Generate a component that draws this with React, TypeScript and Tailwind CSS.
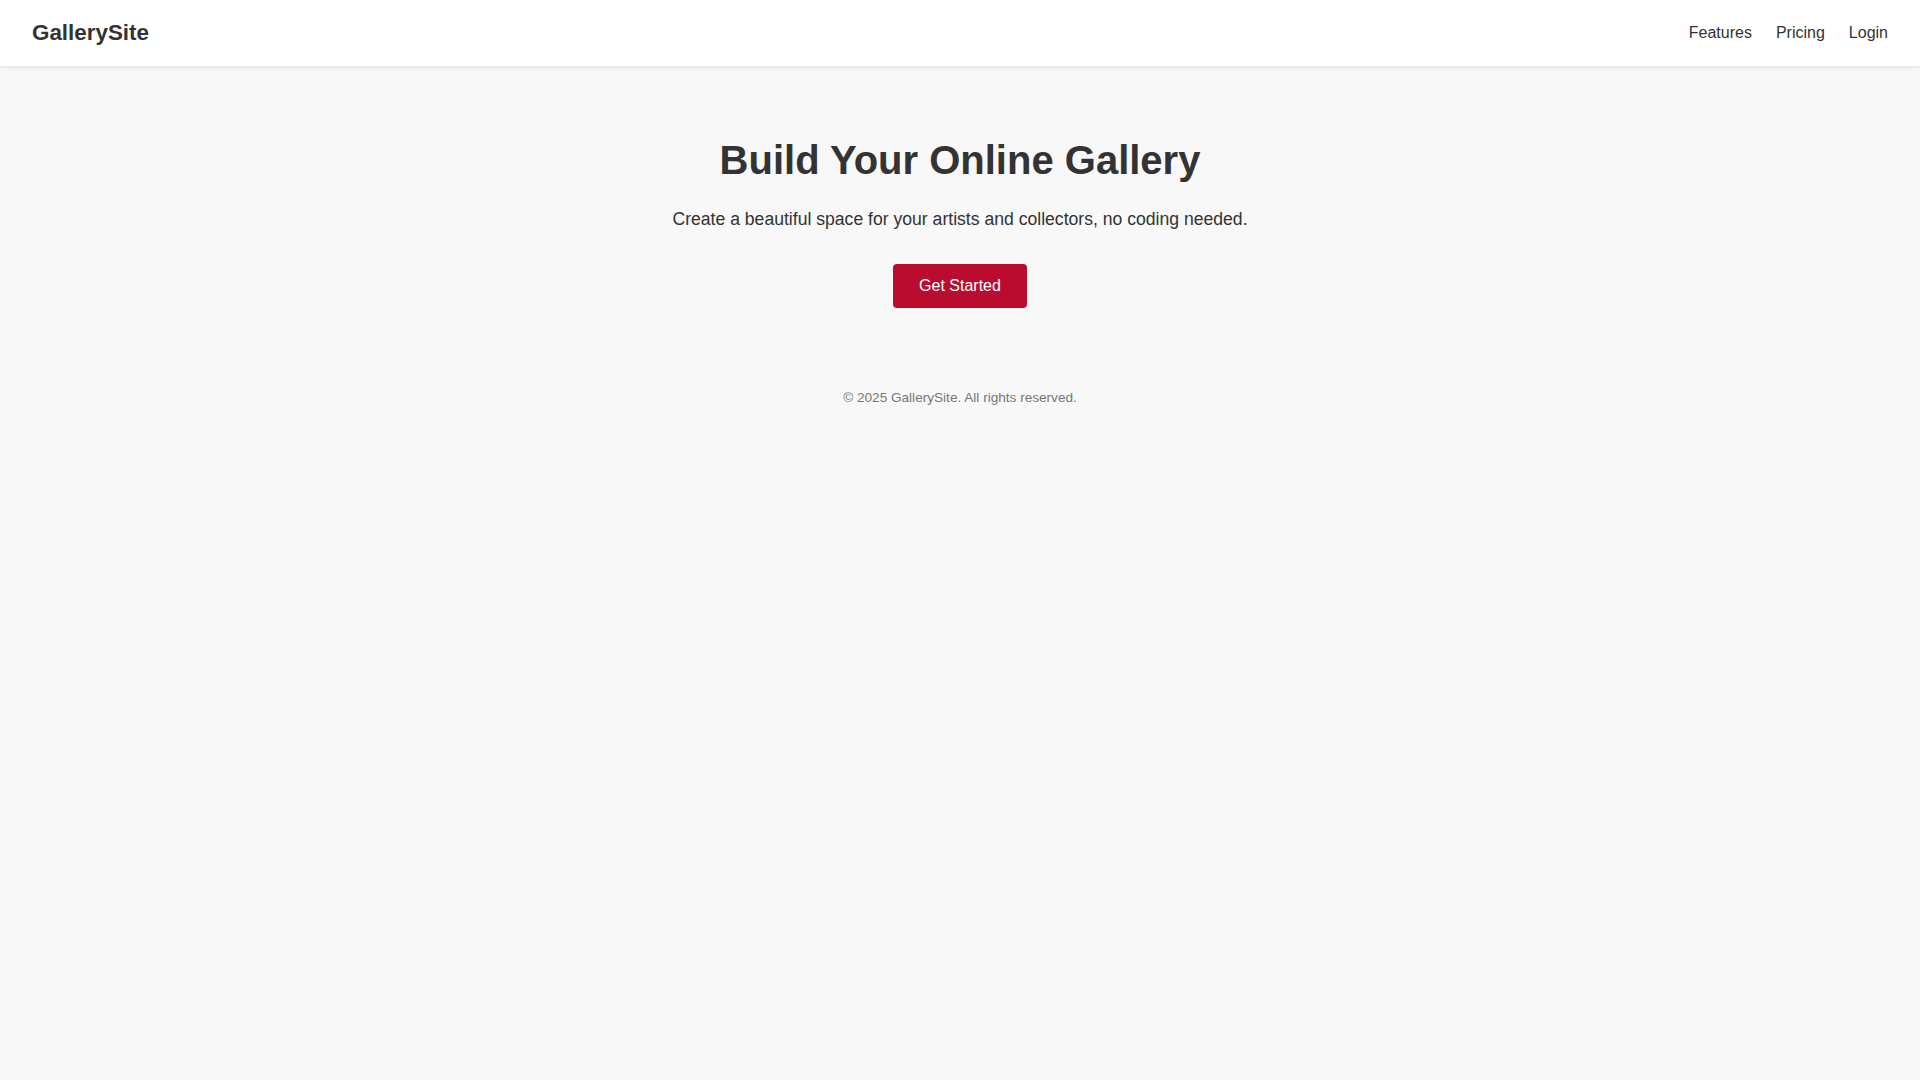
import React from 'react';

const App = () => {
  return (
    <div className="min-h-screen bg-[#f8f8f8] font-['Liberation_Sans',Arial,sans-serif] text-[#333]">
      <header className="h-[66px] bg-white px-8 flex items-center justify-between shadow-[0_2px_4px_rgba(0,0,0,0.08)]">
        <div className="text-[22.4px] font-bold">GallerySite</div>
        <nav className="flex items-center gap-6 text-base">
          <a href="#" className="text-[#333]">Features</a>
          <a href="#" className="text-[#333]">Pricing</a>
          <a href="#" className="text-[#333]">Login</a>
        </nav>
      </header>

      <main className="flex flex-col items-center text-center pt-[71px]">
        <h1 className="text-[40px] leading-[46px] font-bold">Build Your Online Gallery</h1>
        <p className="mt-[26px] text-[17.6px] leading-[20px]">
          Create a beautiful space for your artists and collectors, no coding needed.
        </p>
        <button className="mt-[35px] bg-[#ba0c2f] text-white text-base leading-[20px] px-[26px] py-3 rounded">
          Get Started
        </button>
      </main>

      <footer className="mt-[82px] text-center text-[13.6px] leading-[16px] text-[#777]">
        © 2025 GallerySite. All rights reserved.
      </footer>
    </div>
  );
};

export default App;
